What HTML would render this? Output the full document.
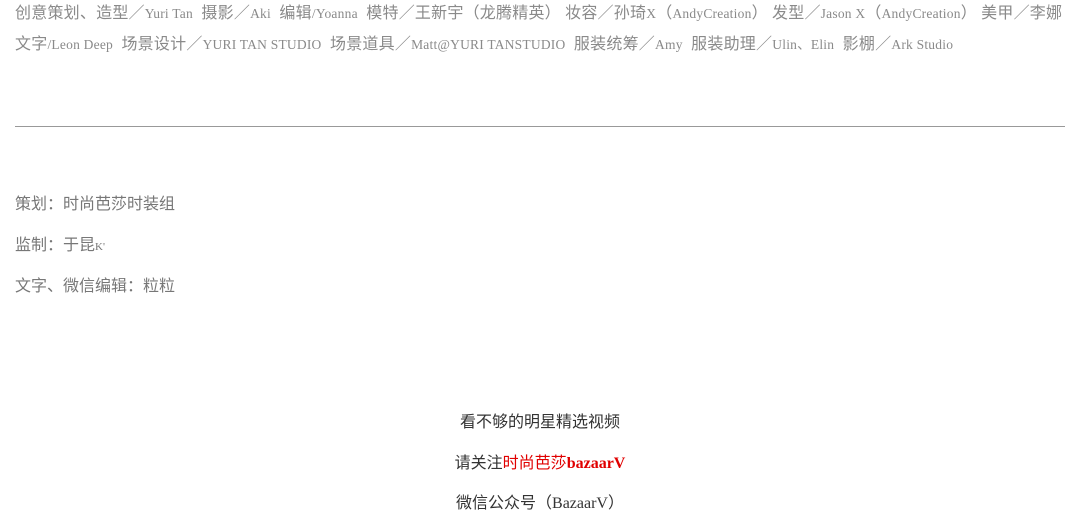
<!DOCTYPE html>
<html><head><meta charset="utf-8"><style>
body{margin:0;width:1080px;height:500px;overflow:hidden;background:#fff;font-family:"Liberation Serif","WenQuanYi Zen Hei",serif;}
.l{position:absolute;left:15px;white-space:nowrap;color:#8a8a8a;font-size:16px;line-height:20px;letter-spacing:0.22px;}
.l span{font-family:"Liberation Serif",serif;font-size:13.5px;}
.c{position:absolute;left:15px;color:#777;font-size:16px;line-height:20px;font-family:"Liberation Serif","WenQuanYi Zen Hei",sans-serif;}
.m{position:absolute;left:0;width:1080px;text-align:center;color:#333;font-size:16px;line-height:20px;font-family:"Liberation Serif","WenQuanYi Zen Hei",sans-serif;}
.r{color:#e00000}
.r b{font-family:"Liberation Serif",serif;}
hr{position:absolute;left:15px;top:126px;width:1050px;margin:0;border:0;border-top:1px solid #999;}
</style></head><body>
<div class="l" style="top:4px">创意策划、造型／<span>Yuri Tan</span>&nbsp; 摄影／<span>Aki</span>&nbsp; 编辑<span>/Yoanna</span>&nbsp; 模特／王新宇（龙腾精英） 妆容／孙琦<span>X</span>（<span>AndyCreation</span>） 发型／<span>Jason X</span>（<span>AndyCreation</span>） 美甲／李娜</div>
<div class="l" style="top:35px">文字<span>/Leon Deep</span>&nbsp; 场景设计／<span>YURI TAN STUDIO</span>&nbsp; 场景道具／<span>Matt@YURI TANSTUDIO</span>&nbsp; 服装统筹／<span>Amy</span>&nbsp; 服装助理／<span>Ulin、Elin</span>&nbsp; 影棚／<span>Ark Studio</span></div>
<hr>
<div class="c" style="top:195px">策划：时尚芭莎时装组</div>
<div class="c" style="top:236px">监制：于昆<span style="font-size:11px">K'</span></div>
<div class="c" style="top:277px">文字、微信编辑：粒粒</div>
<div class="m" style="top:413px">看不够的明星精选视频</div>
<div class="m" style="top:454px">请关注<span class="r">时尚芭莎<b>bazaarV</b></span></div>
<div class="m" style="top:494px">微信公众号（BazaarV）</div>
</body></html>
